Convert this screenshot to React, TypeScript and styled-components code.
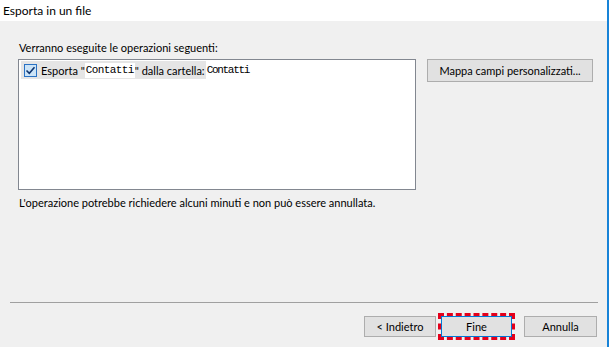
import styled, { createGlobalStyle } from "styled-components";

const GlobalStyle = createGlobalStyle`
  html, body {
    margin: 0;
    padding: 0;
    background: #f0f0f0;
  }
  body {
    font-family: Lato, "Liberation Sans", Arial, sans-serif;
    font-size: 11px;
    color: #000;
  }
`;

const Window = styled.div`
  width: 609px;
  height: 347px;
  display: flex;
  flex-direction: column;
  background: #f0f0f0;
  border-right: 2px solid #1883d7;
  box-sizing: border-box;
`;

const TitleBar = styled.div`
  height: 21px;
  background: #fff;
  padding: 3px 0 0 3px;
  box-sizing: border-box;
  font-size: 12px;
  line-height: 15px;
`;

const Body = styled.div`
  flex: 1;
  display: flex;
  flex-direction: column;
  padding: 19px 0 0 19px;
`;

const Label = styled.div`
  line-height: 15px;
  margin-bottom: 4px;
`;

const Row = styled.div`
  display: flex;
  gap: 11px;
  margin-left: -1px;
`;

const ListBox = styled.div`
  width: 398px;
  height: 131px;
  box-sizing: border-box;
  background: #fff;
  border: 1px solid #828790;
  padding: 1px 2px;
`;

const ListItem = styled.div`
  display: flex;
  align-items: center;
  height: 18px;
  line-height: 15px;
`;

const Highlight = styled.div`
  display: flex;
  align-items: center;
  background: #e5e5e5;
  height: 18px;
  padding: 0 1px 0 3px;
  white-space: pre;
`;

const CheckBox = styled.span`
  width: 13px;
  height: 13px;
  box-sizing: border-box;
  border: 1px solid #2a72c4;
  background: #cce4f7;
  display: inline-flex;
  align-items: center;
  justify-content: center;
  margin-right: 4px;
`;

const Mono = styled.span<{ $white?: boolean; $spacing: number }>`
  font-family: "Liberation Mono", "Courier New", monospace;
  font-size: 11px;
  letter-spacing: ${(p) => p.$spacing}px;
  background: ${(p) => (p.$white ? "#fff" : "transparent")};
  padding: 0 1px;
`;

const SideButton = styled.button`
  width: 166px;
  height: 23px;
  box-sizing: border-box;
  background: #e1e1e1;
  border: 1px solid #adadad;
  font-family: inherit;
  font-size: 11px;
  padding: 0;
  color: #000;
`;

const Note = styled.div`
  margin-top: 5px;
  line-height: 15px;
`;

const Footer = styled.div`
  margin-top: auto;
  display: flex;
  flex-direction: column;
`;

const Separator = styled.div`
  height: 1px;
  background: #a0a0a0;
  margin: 0 9px 0 10px;
`;

const ButtonRow = styled.div`
  display: flex;
  justify-content: flex-end;
  padding: 13px 10px 10px 0;
`;

const Focus = styled.div`
  border: 3px dashed #e3001b;
  margin: -3px -2px -3px -3px;
  display: flex;
`;

const Button = styled.button<{ $width: number; $default?: boolean }>`
  width: ${(p) => p.$width}px;
  height: 21px;
  box-sizing: border-box;
  background: #e1e1e1;
  border: ${(p) => (p.$default ? "1px solid #0078d7" : "1px solid #adadad")};
  font-family: inherit;
  font-size: 11px;
  padding: 0;
  color: #000;
`;

const BackButton = styled(Button)`
  margin-right: 5px;
`;

const CancelButton = styled(Button)`
  margin-left: 11px;
`;

export default function App() {
  return (
    <Window>
      <GlobalStyle />
      <TitleBar>Esporta in un file</TitleBar>
      <Body>
        <Label>Verranno eseguite le operazioni seguenti:</Label>
        <Row>
          <ListBox>
            <ListItem>
              <Highlight>
                <CheckBox>
                  <svg width="11" height="11" viewBox="0 0 11 11">
                    <path d="M1.5 5.5 L4.3 8.3 L9.5 2.3" fill="none" stroke="#0f3570" strokeWidth="1.6" />
                  </svg>
                </CheckBox>
                Esporta "<Mono $white $spacing={-0.6}>Contatti</Mono>" dalla cartella:
              </Highlight>
              <Mono $spacing={-1.3}>Contatti</Mono>
            </ListItem>
          </ListBox>
          <SideButton>Mappa campi personalizzati...</SideButton>
        </Row>
        <Note>L'operazione potrebbe richiedere alcuni minuti e non può essere annullata.</Note>
      </Body>
      <Footer>
        <Separator />
        <ButtonRow>
          <BackButton $width={72}>&lt; Indietro</BackButton>
          <Focus>
            <Button $width={71} $default>Fine</Button>
          </Focus>
          <CancelButton $width={73}>Annulla</CancelButton>
        </ButtonRow>
      </Footer>
    </Window>
  );
}
